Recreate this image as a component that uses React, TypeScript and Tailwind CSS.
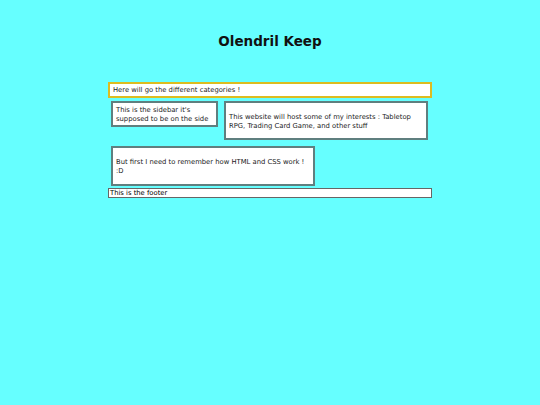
import React from "react";

export default function App() {
    return (
        <div className="min-h-[405px] bg-[#66ffff] text-black" style={{ fontFamily: '"DejaVu Sans", Verdana, sans-serif' }}>
            <header className="pt-[33px] h-[82px]">
                <h1 className="text-center text-[13.5px] font-bold leading-[16px] text-[#111]">Olendril Keep</h1>
            </header>
            <div className="mx-[108px] w-[324px] text-[6.8px] leading-[9px] text-[#222]">
                <nav className="bg-white border-2 border-[#dcbc20] h-[16px] px-[3px] flex items-center">
                    Here will go the different categories !
                </nav>
                <div className="flex items-start gap-[6px] pl-[3px] pt-[3px]">
                    <aside className="w-[107px] h-[26px] bg-white border-2 border-[#5f7f7f] px-[3px] pt-[3px]">
                        This is the sidebar it's supposed to be on the side
                    </aside>
                    <main className="w-[204px] h-[39px] bg-white border-2 border-[#5f7f7f] px-[3px] pt-[10px]">
                        This website will host some of my interests : Tabletop RPG, Trading Card Game, and other stuff
                    </main>
                </div>
                <div className="pl-[3px] pt-[6px]">
                    <section className="w-[204px] h-[40px] bg-white border-2 border-[#5f7f7f] px-[3px] pt-[10px]">
                        But first I need to remember how HTML and CSS work ! :D
                    </section>
                </div>
                <footer className="mt-[2px] h-[10px] bg-white border border-[#666] leading-[8px] px-[1px] text-black">
                    This is the footer
                </footer>
            </div>
        </div>
    );
}
